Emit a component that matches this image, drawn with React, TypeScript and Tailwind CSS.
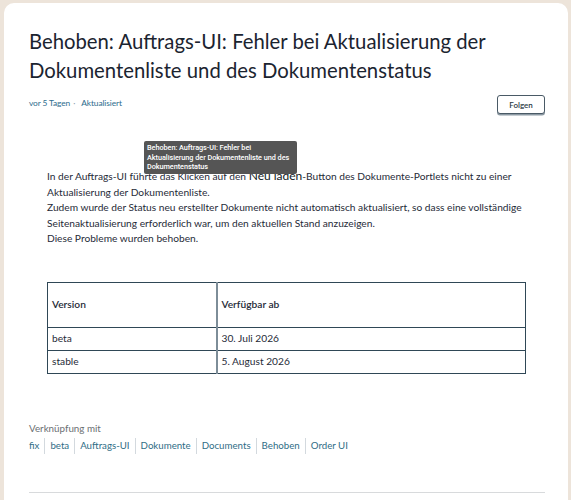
import React from "react";

const tags = ["fix", "beta", "Auftrags-UI", "Dokumente", "Documents", "Behoben", "Order UI"];

export default function App() {
  return (
    <div
      className="h-[500px] w-[571px] overflow-hidden bg-[#ede4da] pl-[4px] pr-[3px] pt-[3px]"
      style={{ fontFamily: "Lato, 'Noto Sans', sans-serif" }}
    >
      <div className="relative h-[520px] rounded-t-[10px] bg-white pl-[25px] pr-[23px] pt-[24px]">
        <h1 className="text-[20.3px] leading-[29px] font-normal text-[#1b2430]">
          Behoben: Auftrags-UI: Fehler bei Aktualisierung der Dokumentenliste und des Dokumentenstatus
        </h1>

        <div className="mt-[10px] flex items-start justify-between">
          <div className="mt-[2px] flex items-center text-[8.4px] tracking-[-0.1px] text-[#2e6d8e]">
            <span>vor 5 Tagen</span>
            <span className="ml-[3px] mr-[6px] text-[#8aa0ae]">·</span>
            <span>Aktualisiert</span>
          </div>
          <button className="h-[19px] w-[48px] rounded-[3px] border border-[#4a5a66] bg-white text-[8px] font-semibold text-[#2b3a45] shadow-[0_1.5px_0_#8c99a3]">
            Folgen
          </button>
        </div>

        <div className="relative mt-[55px] px-[18px]">
          <div className="text-[10.2px] leading-[15.5px] text-[#1f2b38]">
            <p>
              In der Auftrags-UI führte das Klicken auf den{" "}
              <span className="text-[12px] leading-[10px] text-[#111a24]">Neu laden</span>-Button des Dokumente-Portlets
              nicht zu einer Aktualisierung der Dokumentenliste.
            </p>
            <p>
              Zudem wurde der Status neu erstellter Dokumente nicht automatisch aktualisiert, so dass eine vollständige
              Seitenaktualisierung erforderlich war, um den aktuellen Stand anzuzeigen.
            </p>
            <p>Diese Probleme wurden behoben.</p>
          </div>

          <div
            className="absolute left-[115px] top-[-28px] w-[153px] rounded-[2px] bg-[#555555] px-[3px] py-[2px] text-[7.3px] leading-[9.5px] tracking-[-0.05px] font-medium text-white"
            style={{ fontFamily: "Roboto, 'Liberation Sans', Arial, sans-serif" }}
          >
            Behoben: Auftrags-UI: Fehler bei Aktualisierung der Dokumentenliste und des Dokumentenstatus
          </div>

          <table className="mt-[35px] w-[479px] border-collapse text-[10.2px] text-[#1f2b38]">
            <thead>
              <tr className="h-[45px]">
                <th className="w-[169px] border border-[#2f4756] pl-[4px] text-left font-semibold">Version</th>
                <th className="border border-[#2f4756] border-l-2 border-l-[#7d8d98] pl-[4px] text-left font-semibold">
                  Verfügbar ab
                </th>
              </tr>
            </thead>
            <tbody>
              <tr className="h-[23px]">
                <td className="border border-[#2f4756] pl-[4px]">beta</td>
                <td className="border border-[#2f4756] border-l-2 border-l-[#7d8d98] pl-[4px]">30. Juli 2026</td>
              </tr>
              <tr className="h-[23px]">
                <td className="border border-[#2f4756] pl-[4px]">stable</td>
                <td className="border border-[#2f4756] border-l-2 border-l-[#7d8d98] pl-[4px]">5. August 2026</td>
              </tr>
            </tbody>
          </table>
        </div>

        <div className="mt-[46px] text-[9.8px] leading-[16px] text-[#6b6f73]">Verknüpfung mit</div>
        <div className="mt-[2px] flex items-center text-[9.7px] text-[#2f6d86]">
          {tags.map((t, i) => (
            <React.Fragment key={t}>
              {i > 0 && <span className="mx-[5px] h-[16px] w-px bg-[#d3d9de]" />}
              <span>{t}</span>
            </React.Fragment>
          ))}
        </div>

        <div className="mt-[38px] h-px bg-[#d8dadc]" />
      </div>
    </div>
  );
}
